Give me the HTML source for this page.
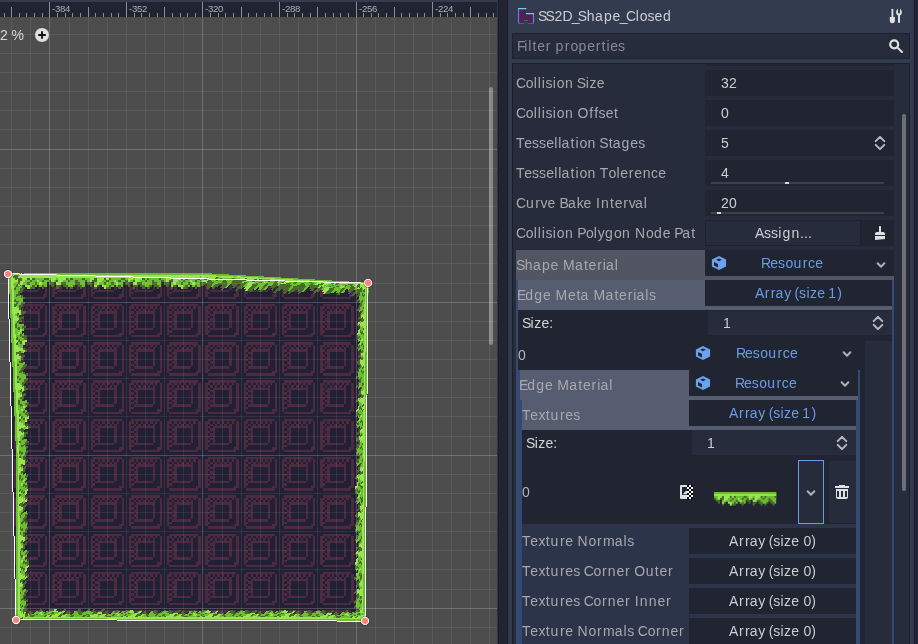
<!DOCTYPE html>
<html><head><meta charset="utf-8"><title>SS2D_Shape_Closed</title>
<style>
html,body{margin:0;padding:0;}
body{width:918px;height:644px;overflow:hidden;background:#202531;font-family:"Liberation Sans",sans-serif;font-size:14px;position:relative;}
.a{position:absolute;}
.t{will-change:transform;position:absolute;white-space:nowrap;line-height:16px;height:16px;font-size:14px;}
svg{position:absolute;overflow:visible;}

</style></head><body>
<div class="a" style="left:0;top:0;width:497px;height:644px;background:#4d4d4d;overflow:hidden;">
<svg width="497" height="644" viewBox="0 0 497 644" style="left:0;top:0;overflow:hidden;">
<defs>
<g id="tl" shape-rendering="crispEdges" fill="#4c2a40"><rect x="2" y="1" width="12" height="1"/><rect x="1" y="2" width="2" height="1"/><rect x="4" y="2" width="1" height="1"/><rect x="6" y="2" width="1" height="1"/><rect x="8" y="2" width="1" height="1"/><rect x="10" y="2" width="1" height="1"/><rect x="12" y="2" width="1" height="1"/><rect x="14" y="2" width="1" height="1"/><rect x="1" y="3" width="1" height="1"/><rect x="3" y="3" width="1" height="1"/><rect x="5" y="3" width="1" height="1"/><rect x="7" y="3" width="1" height="1"/><rect x="9" y="3" width="1" height="1"/><rect x="11" y="3" width="1" height="1"/><rect x="14" y="3" width="1" height="1"/><rect x="1" y="4" width="2" height="1"/><rect x="4" y="4" width="8" height="1"/><rect x="14" y="4" width="1" height="1"/><rect x="1" y="5" width="1" height="1"/><rect x="3" y="5" width="2" height="1"/><rect x="11" y="5" width="1" height="1"/><rect x="14" y="5" width="1" height="1"/><rect x="1" y="6" width="2" height="1"/><rect x="4" y="6" width="1" height="1"/><rect x="11" y="6" width="1" height="1"/><rect x="14" y="6" width="1" height="1"/><rect x="1" y="7" width="1" height="1"/><rect x="3" y="7" width="2" height="1"/><rect x="11" y="7" width="1" height="1"/><rect x="14" y="7" width="1" height="1"/><rect x="1" y="8" width="2" height="1"/><rect x="4" y="8" width="1" height="1"/><rect x="11" y="8" width="1" height="1"/><rect x="14" y="8" width="1" height="1"/><rect x="1" y="9" width="1" height="1"/><rect x="3" y="9" width="2" height="1"/><rect x="11" y="9" width="1" height="1"/><rect x="14" y="9" width="1" height="1"/><rect x="1" y="10" width="2" height="1"/><rect x="4" y="10" width="1" height="1"/><rect x="11" y="10" width="1" height="1"/><rect x="14" y="10" width="1" height="1"/><rect x="1" y="11" width="1" height="1"/><rect x="3" y="11" width="8" height="1"/><rect x="14" y="11" width="1" height="1"/><rect x="1" y="12" width="2" height="1"/><rect x="14" y="12" width="1" height="1"/><rect x="1" y="13" width="1" height="1"/><rect x="13" y="13" width="2" height="1"/><rect x="2" y="14" width="12" height="1"/></g>
<g id="gr" shape-rendering="crispEdges"><rect x="0" y="0" width="32" height="1" fill="#6abe30"/><rect x="0" y="1" width="32" height="1" fill="#99e550"/><rect x="0" y="2" width="2" height="1" fill="#6abe30"/><rect x="2" y="2" width="2" height="1" fill="#99e550"/><rect x="4" y="2" width="1" height="1" fill="#4b692f"/><rect x="5" y="2" width="3" height="1" fill="#99e550"/><rect x="8" y="2" width="1" height="1" fill="#4b692f"/><rect x="9" y="2" width="1" height="1" fill="#99e550"/><rect x="10" y="2" width="1" height="1" fill="#4b692f"/><rect x="11" y="2" width="4" height="1" fill="#6abe30"/><rect x="15" y="2" width="2" height="1" fill="#4b692f"/><rect x="17" y="2" width="1" height="1" fill="#6abe30"/><rect x="18" y="2" width="2" height="1" fill="#99e550"/><rect x="20" y="2" width="1" height="1" fill="#6abe30"/><rect x="21" y="2" width="3" height="1" fill="#99e550"/><rect x="24" y="2" width="1" height="1" fill="#4b692f"/><rect x="25" y="2" width="1" height="1" fill="#6abe30"/><rect x="26" y="2" width="1" height="1" fill="#4b692f"/><rect x="27" y="2" width="4" height="1" fill="#6abe30"/><rect x="31" y="2" width="1" height="1" fill="#4b692f"/><rect x="0" y="3" width="1" height="1" fill="#4b692f"/><rect x="1" y="3" width="1" height="1" fill="#6abe30"/><rect x="2" y="3" width="1" height="1" fill="#99e550"/><rect x="3" y="3" width="2" height="1" fill="#4b692f"/><rect x="5" y="3" width="2" height="1" fill="#99e550"/><rect x="7" y="3" width="2" height="1" fill="#6abe30"/><rect x="9" y="3" width="1" height="1" fill="#4b692f"/><rect x="10" y="3" width="2" height="1" fill="#6abe30"/><rect x="12" y="3" width="1" height="1" fill="#99e550"/><rect x="13" y="3" width="1" height="1" fill="#6abe30"/><rect x="14" y="3" width="1" height="1" fill="#4b692f"/><rect x="15" y="3" width="2" height="1" fill="#6abe30"/><rect x="17" y="3" width="1" height="1" fill="#4b692f"/><rect x="18" y="3" width="1" height="1" fill="#99e550"/><rect x="19" y="3" width="1" height="1" fill="#6abe30"/><rect x="20" y="3" width="1" height="1" fill="#4b692f"/><rect x="21" y="3" width="2" height="1" fill="#99e550"/><rect x="23" y="3" width="2" height="1" fill="#6abe30"/><rect x="25" y="3" width="1" height="1" fill="#4b692f"/><rect x="26" y="3" width="2" height="1" fill="#6abe30"/><rect x="28" y="3" width="1" height="1" fill="#4b692f"/><rect x="29" y="3" width="3" height="1" fill="#6abe30"/><rect x="1" y="4" width="2" height="1" fill="#4b692f"/><rect x="4" y="4" width="1" height="1" fill="#6abe30"/><rect x="5" y="4" width="1" height="1" fill="#99e550"/><rect x="6" y="4" width="2" height="1" fill="#6abe30"/><rect x="8" y="4" width="1" height="1" fill="#4b692f"/><rect x="9" y="4" width="2" height="1" fill="#6abe30"/><rect x="11" y="4" width="1" height="1" fill="#4b692f"/><rect x="12" y="4" width="1" height="1" fill="#6abe30"/><rect x="13" y="4" width="1" height="1" fill="#99e550"/><rect x="14" y="4" width="2" height="1" fill="#6abe30"/><rect x="17" y="4" width="2" height="1" fill="#4b692f"/><rect x="20" y="4" width="2" height="1" fill="#99e550"/><rect x="22" y="4" width="2" height="1" fill="#4b692f"/><rect x="24" y="4" width="4" height="1" fill="#6abe30"/><rect x="28" y="4" width="2" height="1" fill="#4b692f"/><rect x="30" y="4" width="2" height="1" fill="#6abe30"/><rect x="2" y="5" width="1" height="1" fill="#4b692f"/><rect x="4" y="5" width="1" height="1" fill="#99e550"/><rect x="5" y="5" width="1" height="1" fill="#4b692f"/><rect x="7" y="5" width="2" height="1" fill="#99e550"/><rect x="9" y="5" width="1" height="1" fill="#6abe30"/><rect x="10" y="5" width="1" height="1" fill="#4b692f"/><rect x="11" y="5" width="1" height="1" fill="#6abe30"/><rect x="13" y="5" width="1" height="1" fill="#6abe30"/><rect x="14" y="5" width="1" height="1" fill="#4b692f"/><rect x="15" y="5" width="1" height="1" fill="#6abe30"/><rect x="18" y="5" width="1" height="1" fill="#4b692f"/><rect x="20" y="5" width="2" height="1" fill="#4b692f"/><rect x="23" y="5" width="2" height="1" fill="#4b692f"/><rect x="25" y="5" width="2" height="1" fill="#6abe30"/><rect x="27" y="5" width="1" height="1" fill="#4b692f"/><rect x="29" y="5" width="2" height="1" fill="#4b692f"/><rect x="31" y="5" width="1" height="1" fill="#6abe30"/><rect x="4" y="6" width="1" height="1" fill="#4b692f"/><rect x="8" y="6" width="1" height="1" fill="#99e550"/><rect x="9" y="6" width="2" height="1" fill="#4b692f"/><rect x="14" y="6" width="1" height="1" fill="#4b692f"/><rect x="20" y="6" width="1" height="1" fill="#4b692f"/><rect x="24" y="6" width="1" height="1" fill="#4b692f"/><rect x="26" y="6" width="1" height="1" fill="#4b692f"/><rect x="30" y="6" width="1" height="1" fill="#4b692f"/></g>
<pattern id="gp" patternUnits="userSpaceOnUse" x="0" y="0" width="32" height="8"><use href="#gr"/></pattern>
<clipPath id="sc"><polygon points="6.8,271.5 200,271.5 369.5,281.3 366.5,622.3 14.6,621.5"/></clipPath>
<clipPath id="fc"><polygon points="8,274 368,283 365,620.8 16,620"/></clipPath>
</defs>
<g clip-path="url(#fc)">
<polygon points="8,274 368,283 365,620.8 16,620" fill="#222034"/>
<use href="#tl" transform="translate(-26.694,263.278) scale(2.39200)"/>
<use href="#tl" transform="translate(-26.694,301.550) scale(2.39200)"/>
<use href="#tl" transform="translate(-26.694,339.822) scale(2.39200)"/>
<use href="#tl" transform="translate(-26.694,378.094) scale(2.39200)"/>
<use href="#tl" transform="translate(-26.694,416.366) scale(2.39200)"/>
<use href="#tl" transform="translate(-26.694,454.638) scale(2.39200)"/>
<use href="#tl" transform="translate(-26.694,492.910) scale(2.39200)"/>
<use href="#tl" transform="translate(-26.694,531.182) scale(2.39200)"/>
<use href="#tl" transform="translate(-26.694,569.454) scale(2.39200)"/>
<use href="#tl" transform="translate(-26.694,607.726) scale(2.39200)"/>
<use href="#tl" transform="translate(11.578,263.278) scale(2.39200)"/>
<use href="#tl" transform="translate(11.578,301.550) scale(2.39200)"/>
<use href="#tl" transform="translate(11.578,339.822) scale(2.39200)"/>
<use href="#tl" transform="translate(11.578,378.094) scale(2.39200)"/>
<use href="#tl" transform="translate(11.578,416.366) scale(2.39200)"/>
<use href="#tl" transform="translate(11.578,454.638) scale(2.39200)"/>
<use href="#tl" transform="translate(11.578,492.910) scale(2.39200)"/>
<use href="#tl" transform="translate(11.578,531.182) scale(2.39200)"/>
<use href="#tl" transform="translate(11.578,569.454) scale(2.39200)"/>
<use href="#tl" transform="translate(11.578,607.726) scale(2.39200)"/>
<use href="#tl" transform="translate(49.850,263.278) scale(2.39200)"/>
<use href="#tl" transform="translate(49.850,301.550) scale(2.39200)"/>
<use href="#tl" transform="translate(49.850,339.822) scale(2.39200)"/>
<use href="#tl" transform="translate(49.850,378.094) scale(2.39200)"/>
<use href="#tl" transform="translate(49.850,416.366) scale(2.39200)"/>
<use href="#tl" transform="translate(49.850,454.638) scale(2.39200)"/>
<use href="#tl" transform="translate(49.850,492.910) scale(2.39200)"/>
<use href="#tl" transform="translate(49.850,531.182) scale(2.39200)"/>
<use href="#tl" transform="translate(49.850,569.454) scale(2.39200)"/>
<use href="#tl" transform="translate(49.850,607.726) scale(2.39200)"/>
<use href="#tl" transform="translate(88.122,263.278) scale(2.39200)"/>
<use href="#tl" transform="translate(88.122,301.550) scale(2.39200)"/>
<use href="#tl" transform="translate(88.122,339.822) scale(2.39200)"/>
<use href="#tl" transform="translate(88.122,378.094) scale(2.39200)"/>
<use href="#tl" transform="translate(88.122,416.366) scale(2.39200)"/>
<use href="#tl" transform="translate(88.122,454.638) scale(2.39200)"/>
<use href="#tl" transform="translate(88.122,492.910) scale(2.39200)"/>
<use href="#tl" transform="translate(88.122,531.182) scale(2.39200)"/>
<use href="#tl" transform="translate(88.122,569.454) scale(2.39200)"/>
<use href="#tl" transform="translate(88.122,607.726) scale(2.39200)"/>
<use href="#tl" transform="translate(126.394,263.278) scale(2.39200)"/>
<use href="#tl" transform="translate(126.394,301.550) scale(2.39200)"/>
<use href="#tl" transform="translate(126.394,339.822) scale(2.39200)"/>
<use href="#tl" transform="translate(126.394,378.094) scale(2.39200)"/>
<use href="#tl" transform="translate(126.394,416.366) scale(2.39200)"/>
<use href="#tl" transform="translate(126.394,454.638) scale(2.39200)"/>
<use href="#tl" transform="translate(126.394,492.910) scale(2.39200)"/>
<use href="#tl" transform="translate(126.394,531.182) scale(2.39200)"/>
<use href="#tl" transform="translate(126.394,569.454) scale(2.39200)"/>
<use href="#tl" transform="translate(126.394,607.726) scale(2.39200)"/>
<use href="#tl" transform="translate(164.666,263.278) scale(2.39200)"/>
<use href="#tl" transform="translate(164.666,301.550) scale(2.39200)"/>
<use href="#tl" transform="translate(164.666,339.822) scale(2.39200)"/>
<use href="#tl" transform="translate(164.666,378.094) scale(2.39200)"/>
<use href="#tl" transform="translate(164.666,416.366) scale(2.39200)"/>
<use href="#tl" transform="translate(164.666,454.638) scale(2.39200)"/>
<use href="#tl" transform="translate(164.666,492.910) scale(2.39200)"/>
<use href="#tl" transform="translate(164.666,531.182) scale(2.39200)"/>
<use href="#tl" transform="translate(164.666,569.454) scale(2.39200)"/>
<use href="#tl" transform="translate(164.666,607.726) scale(2.39200)"/>
<use href="#tl" transform="translate(202.938,263.278) scale(2.39200)"/>
<use href="#tl" transform="translate(202.938,301.550) scale(2.39200)"/>
<use href="#tl" transform="translate(202.938,339.822) scale(2.39200)"/>
<use href="#tl" transform="translate(202.938,378.094) scale(2.39200)"/>
<use href="#tl" transform="translate(202.938,416.366) scale(2.39200)"/>
<use href="#tl" transform="translate(202.938,454.638) scale(2.39200)"/>
<use href="#tl" transform="translate(202.938,492.910) scale(2.39200)"/>
<use href="#tl" transform="translate(202.938,531.182) scale(2.39200)"/>
<use href="#tl" transform="translate(202.938,569.454) scale(2.39200)"/>
<use href="#tl" transform="translate(202.938,607.726) scale(2.39200)"/>
<use href="#tl" transform="translate(241.210,263.278) scale(2.39200)"/>
<use href="#tl" transform="translate(241.210,301.550) scale(2.39200)"/>
<use href="#tl" transform="translate(241.210,339.822) scale(2.39200)"/>
<use href="#tl" transform="translate(241.210,378.094) scale(2.39200)"/>
<use href="#tl" transform="translate(241.210,416.366) scale(2.39200)"/>
<use href="#tl" transform="translate(241.210,454.638) scale(2.39200)"/>
<use href="#tl" transform="translate(241.210,492.910) scale(2.39200)"/>
<use href="#tl" transform="translate(241.210,531.182) scale(2.39200)"/>
<use href="#tl" transform="translate(241.210,569.454) scale(2.39200)"/>
<use href="#tl" transform="translate(241.210,607.726) scale(2.39200)"/>
<use href="#tl" transform="translate(279.482,263.278) scale(2.39200)"/>
<use href="#tl" transform="translate(279.482,301.550) scale(2.39200)"/>
<use href="#tl" transform="translate(279.482,339.822) scale(2.39200)"/>
<use href="#tl" transform="translate(279.482,378.094) scale(2.39200)"/>
<use href="#tl" transform="translate(279.482,416.366) scale(2.39200)"/>
<use href="#tl" transform="translate(279.482,454.638) scale(2.39200)"/>
<use href="#tl" transform="translate(279.482,492.910) scale(2.39200)"/>
<use href="#tl" transform="translate(279.482,531.182) scale(2.39200)"/>
<use href="#tl" transform="translate(279.482,569.454) scale(2.39200)"/>
<use href="#tl" transform="translate(279.482,607.726) scale(2.39200)"/>
<use href="#tl" transform="translate(317.754,263.278) scale(2.39200)"/>
<use href="#tl" transform="translate(317.754,301.550) scale(2.39200)"/>
<use href="#tl" transform="translate(317.754,339.822) scale(2.39200)"/>
<use href="#tl" transform="translate(317.754,378.094) scale(2.39200)"/>
<use href="#tl" transform="translate(317.754,416.366) scale(2.39200)"/>
<use href="#tl" transform="translate(317.754,454.638) scale(2.39200)"/>
<use href="#tl" transform="translate(317.754,492.910) scale(2.39200)"/>
<use href="#tl" transform="translate(317.754,531.182) scale(2.39200)"/>
<use href="#tl" transform="translate(317.754,569.454) scale(2.39200)"/>
<use href="#tl" transform="translate(317.754,607.726) scale(2.39200)"/>
<use href="#tl" transform="translate(356.026,263.278) scale(2.39200)"/>
<use href="#tl" transform="translate(356.026,301.550) scale(2.39200)"/>
<use href="#tl" transform="translate(356.026,339.822) scale(2.39200)"/>
<use href="#tl" transform="translate(356.026,378.094) scale(2.39200)"/>
<use href="#tl" transform="translate(356.026,416.366) scale(2.39200)"/>
<use href="#tl" transform="translate(356.026,454.638) scale(2.39200)"/>
<use href="#tl" transform="translate(356.026,492.910) scale(2.39200)"/>
<use href="#tl" transform="translate(356.026,531.182) scale(2.39200)"/>
<use href="#tl" transform="translate(356.026,569.454) scale(2.39200)"/>
<use href="#tl" transform="translate(356.026,607.726) scale(2.39200)"/>
</g>
<g clip-path="url(#sc)">
<clipPath id="gc0"><rect x="0" y="-2" width="192.30" height="26"/></clipPath>
<g transform="translate(8.3,272.8) rotate(0.0000)" clip-path="url(#gc0)">
<svg x="0.000" y="-2" width="38.292" height="30" viewBox="0 -0.8421 16 12.6316" preserveAspectRatio="none" overflow="hidden"><g transform="matrix(1,0,0.0000,1,0,0)"><use href="#gr" x="-32"/><use href="#gr"/><use href="#gr" x="32"/></g></svg>
<svg x="38.272" y="-2" width="38.292" height="30" viewBox="16 -0.8421 16 12.6316" preserveAspectRatio="none" overflow="hidden"><g transform="matrix(1,0,0.0000,1,0,0)"><use href="#gr" x="-32"/><use href="#gr"/><use href="#gr" x="32"/></g></svg>
<svg x="76.544" y="-2" width="38.292" height="30" viewBox="0 -0.8421 16 12.6316" preserveAspectRatio="none" overflow="hidden"><g transform="matrix(1,0,0.0000,1,0,0)"><use href="#gr" x="-32"/><use href="#gr"/><use href="#gr" x="32"/></g></svg>
<svg x="114.816" y="-2" width="38.292" height="30" viewBox="16 -0.8421 16 12.6316" preserveAspectRatio="none" overflow="hidden"><g transform="matrix(1,0,0.0000,1,0,0)"><use href="#gr" x="-32"/><use href="#gr"/><use href="#gr" x="32"/></g></svg>
<svg x="153.088" y="-2" width="38.292" height="30" viewBox="0 -0.8421 16 12.6316" preserveAspectRatio="none" overflow="hidden"><g transform="matrix(1,0,0.0000,1,0,0)"><use href="#gr" x="-32"/><use href="#gr"/><use href="#gr" x="32"/></g></svg>
<svg x="191.360" y="-2" width="38.292" height="30" viewBox="16 -0.8421 16 12.6316" preserveAspectRatio="none" overflow="hidden"><g transform="matrix(1,0,0.0000,1,0,0)"><use href="#gr" x="-32"/><use href="#gr"/><use href="#gr" x="32"/></g></svg>
</g>
<clipPath id="gc1"><rect x="0" y="-2" width="168.60" height="26"/></clipPath>
<g transform="matrix(1,0.05833,0,1,200,272.8)" clip-path="url(#gc1)">
<svg x="-0.340" y="-2" width="38.292" height="30" viewBox="16 -0.8865 16 13.2971" preserveAspectRatio="none" overflow="hidden"><g transform="matrix(1,0,-0.7546,1,0,0)"><use href="#gr" x="-32"/><use href="#gr"/><use href="#gr" x="32"/></g></svg>
<svg x="37.932" y="-2" width="38.292" height="30" viewBox="0 -0.9930 16 14.8951" preserveAspectRatio="none" overflow="hidden"><g transform="matrix(1,0,-0.6736,1,0,0)"><use href="#gr" x="-32"/><use href="#gr"/><use href="#gr" x="32"/></g></svg>
<svg x="76.204" y="-2" width="38.292" height="30" viewBox="16 -1.1286 16 16.9297" preserveAspectRatio="none" overflow="hidden"><g transform="matrix(1,0,-0.5927,1,0,0)"><use href="#gr" x="-32"/><use href="#gr"/><use href="#gr" x="32"/></g></svg>
<svg x="114.476" y="-2" width="38.292" height="30" viewBox="0 -1.3072 16 19.6081" preserveAspectRatio="none" overflow="hidden"><g transform="matrix(1,0,-0.5117,1,0,0)"><use href="#gr" x="-32"/><use href="#gr"/><use href="#gr" x="32"/></g></svg>
<svg x="152.748" y="-2" width="38.292" height="30" viewBox="16 -1.5238 16 22.8571" preserveAspectRatio="none" overflow="hidden"><g transform="matrix(1,0,-0.4390,1,0,0)"><use href="#gr" x="-32"/><use href="#gr"/><use href="#gr" x="32"/></g></svg>
</g>
<clipPath id="gc2"><rect x="0" y="-2" width="338.61" height="26"/></clipPath>
<g transform="translate(367.6,283) rotate(90.5085)" clip-path="url(#gc2)">
<svg x="-15.252" y="-2" width="38.292" height="30" viewBox="16 -1.3906 16 20.8591" preserveAspectRatio="none" overflow="hidden"><g transform="matrix(1,0,0.4810,1,0,0)"><use href="#gr" x="-32"/><use href="#gr"/><use href="#gr" x="32"/></g></svg>
<svg x="23.020" y="-2" width="38.292" height="30" viewBox="0 -1.3838 16 20.7570" preserveAspectRatio="none" overflow="hidden"><g transform="matrix(1,0,0.4834,1,0,0)"><use href="#gr" x="-32"/><use href="#gr"/><use href="#gr" x="32"/></g></svg>
<svg x="61.292" y="-2" width="38.292" height="30" viewBox="16 -1.3771 16 20.6559" preserveAspectRatio="none" overflow="hidden"><g transform="matrix(1,0,0.4857,1,0,0)"><use href="#gr" x="-32"/><use href="#gr"/><use href="#gr" x="32"/></g></svg>
<svg x="99.564" y="-2" width="38.292" height="30" viewBox="0 -1.3704 16 20.5557" preserveAspectRatio="none" overflow="hidden"><g transform="matrix(1,0,0.4881,1,0,0)"><use href="#gr" x="-32"/><use href="#gr"/><use href="#gr" x="32"/></g></svg>
<svg x="137.836" y="-2" width="38.292" height="30" viewBox="16 -1.3638 16 20.4565" preserveAspectRatio="none" overflow="hidden"><g transform="matrix(1,0,0.4905,1,0,0)"><use href="#gr" x="-32"/><use href="#gr"/><use href="#gr" x="32"/></g></svg>
<svg x="176.108" y="-2" width="38.292" height="30" viewBox="0 -1.3572 16 20.3583" preserveAspectRatio="none" overflow="hidden"><g transform="matrix(1,0,0.4928,1,0,0)"><use href="#gr" x="-32"/><use href="#gr"/><use href="#gr" x="32"/></g></svg>
<svg x="214.380" y="-2" width="38.292" height="30" viewBox="16 -1.3507 16 20.2610" preserveAspectRatio="none" overflow="hidden"><g transform="matrix(1,0,0.4952,1,0,0)"><use href="#gr" x="-32"/><use href="#gr"/><use href="#gr" x="32"/></g></svg>
<svg x="252.652" y="-2" width="38.292" height="30" viewBox="0 -1.3443 16 20.1646" preserveAspectRatio="none" overflow="hidden"><g transform="matrix(1,0,0.4976,1,0,0)"><use href="#gr" x="-32"/><use href="#gr"/><use href="#gr" x="32"/></g></svg>
<svg x="290.924" y="-2" width="38.292" height="30" viewBox="16 -1.3379 16 20.0692" preserveAspectRatio="none" overflow="hidden"><g transform="matrix(1,0,0.4999,1,0,0)"><use href="#gr" x="-32"/><use href="#gr"/><use href="#gr" x="32"/></g></svg>
<svg x="329.196" y="-2" width="38.292" height="30" viewBox="0 -1.3333 16 20.0000" preserveAspectRatio="none" overflow="hidden"><g transform="matrix(1,0,0.5017,1,0,0)"><use href="#gr" x="-32"/><use href="#gr"/><use href="#gr" x="32"/></g></svg>
</g>
<clipPath id="gc3"><rect x="0" y="-2" width="349.60" height="26"/></clipPath>
<g transform="translate(365,620.6) rotate(-179.8687)" clip-path="url(#gc3)">
<svg x="-8.817" y="-2" width="38.292" height="30" viewBox="0 -1.3333 16 20.0000" preserveAspectRatio="none" overflow="hidden"><g transform="matrix(1,0,-0.5017,1,0,0)"><use href="#gr" x="-32"/><use href="#gr"/><use href="#gr" x="32"/></g></svg>
<svg x="29.455" y="-2" width="38.292" height="30" viewBox="16 -1.3333 16 20.0000" preserveAspectRatio="none" overflow="hidden"><g transform="matrix(1,0,-0.5017,1,0,0)"><use href="#gr" x="-32"/><use href="#gr"/><use href="#gr" x="32"/></g></svg>
<svg x="67.727" y="-2" width="38.292" height="30" viewBox="0 -1.3333 16 20.0000" preserveAspectRatio="none" overflow="hidden"><g transform="matrix(1,0,-0.5017,1,0,0)"><use href="#gr" x="-32"/><use href="#gr"/><use href="#gr" x="32"/></g></svg>
<svg x="105.999" y="-2" width="38.292" height="30" viewBox="16 -1.3333 16 20.0000" preserveAspectRatio="none" overflow="hidden"><g transform="matrix(1,0,-0.5017,1,0,0)"><use href="#gr" x="-32"/><use href="#gr"/><use href="#gr" x="32"/></g></svg>
<svg x="144.271" y="-2" width="38.292" height="30" viewBox="0 -1.3333 16 20.0000" preserveAspectRatio="none" overflow="hidden"><g transform="matrix(1,0,-0.5017,1,0,0)"><use href="#gr" x="-32"/><use href="#gr"/><use href="#gr" x="32"/></g></svg>
<svg x="182.543" y="-2" width="38.292" height="30" viewBox="16 -1.3333 16 20.0000" preserveAspectRatio="none" overflow="hidden"><g transform="matrix(1,0,-0.5017,1,0,0)"><use href="#gr" x="-32"/><use href="#gr"/><use href="#gr" x="32"/></g></svg>
<svg x="220.815" y="-2" width="38.292" height="30" viewBox="0 -1.3333 16 20.0000" preserveAspectRatio="none" overflow="hidden"><g transform="matrix(1,0,-0.5017,1,0,0)"><use href="#gr" x="-32"/><use href="#gr"/><use href="#gr" x="32"/></g></svg>
<svg x="259.087" y="-2" width="38.292" height="30" viewBox="16 -1.3333 16 20.0000" preserveAspectRatio="none" overflow="hidden"><g transform="matrix(1,0,-0.5017,1,0,0)"><use href="#gr" x="-32"/><use href="#gr"/><use href="#gr" x="32"/></g></svg>
<svg x="297.359" y="-2" width="38.292" height="30" viewBox="0 -1.3333 16 20.0000" preserveAspectRatio="none" overflow="hidden"><g transform="matrix(1,0,-0.5017,1,0,0)"><use href="#gr" x="-32"/><use href="#gr"/><use href="#gr" x="32"/></g></svg>
<svg x="335.631" y="-2" width="38.292" height="30" viewBox="16 -1.3333 16 20.0000" preserveAspectRatio="none" overflow="hidden"><g transform="matrix(1,0,-0.5017,1,0,0)"><use href="#gr" x="-32"/><use href="#gr"/><use href="#gr" x="32"/></g></svg>
</g>
<clipPath id="gc4"><rect x="0" y="-2" width="175.60" height="26"/></clipPath>
<g transform="translate(16.3,620) rotate(-90.1964)" clip-path="url(#gc4)">
<svg x="-13.370" y="-2" width="38.292" height="30" viewBox="16 -1.3242 16 19.8637" preserveAspectRatio="none" overflow="hidden"><g transform="matrix(1,0,0.4420,1,0,0)"><use href="#gr" x="-32"/><use href="#gr"/><use href="#gr" x="32"/></g></svg>
<svg x="24.902" y="-2" width="38.292" height="30" viewBox="0 -1.2669 16 19.0037" preserveAspectRatio="none" overflow="hidden"><g transform="matrix(1,0,0.4620,1,0,0)"><use href="#gr" x="-32"/><use href="#gr"/><use href="#gr" x="32"/></g></svg>
<svg x="63.174" y="-2" width="38.292" height="30" viewBox="16 -1.2143 16 18.2151" preserveAspectRatio="none" overflow="hidden"><g transform="matrix(1,0,0.4820,1,0,0)"><use href="#gr" x="-32"/><use href="#gr"/><use href="#gr" x="32"/></g></svg>
<svg x="101.446" y="-2" width="38.292" height="30" viewBox="0 -1.1660 16 17.4894" preserveAspectRatio="none" overflow="hidden"><g transform="matrix(1,0,0.5020,1,0,0)"><use href="#gr" x="-32"/><use href="#gr"/><use href="#gr" x="32"/></g></svg>
<svg x="139.718" y="-2" width="38.292" height="30" viewBox="16 -1.1213 16 16.8193" preserveAspectRatio="none" overflow="hidden"><g transform="matrix(1,0,0.5220,1,0,0)"><use href="#gr" x="-32"/><use href="#gr"/><use href="#gr" x="32"/></g></svg>
</g>
<clipPath id="gc5"><rect x="0" y="-2" width="171.74" height="26"/></clipPath>
<g transform="translate(15.7,445) rotate(-92.3441)" clip-path="url(#gc5)">
<svg x="-35.283" y="-2" width="38.292" height="30" viewBox="16 -1.1034 16 16.5517" preserveAspectRatio="none" overflow="hidden"><g transform="matrix(1,0,0.1894,1,0,0)"><use href="#gr" x="-32"/><use href="#gr"/><use href="#gr" x="32"/></g></svg>
<svg x="2.989" y="-2" width="38.292" height="30" viewBox="0 -1.0747 16 16.1206" preserveAspectRatio="none" overflow="hidden"><g transform="matrix(1,0,0.1945,1,0,0)"><use href="#gr" x="-32"/><use href="#gr"/><use href="#gr" x="32"/></g></svg>
<svg x="41.261" y="-2" width="38.292" height="30" viewBox="16 -1.0284 16 15.4254" preserveAspectRatio="none" overflow="hidden"><g transform="matrix(1,0,0.2033,1,0,0)"><use href="#gr" x="-32"/><use href="#gr"/><use href="#gr" x="32"/></g></svg>
<svg x="79.533" y="-2" width="38.292" height="30" viewBox="0 -0.9859 16 14.7878" preserveAspectRatio="none" overflow="hidden"><g transform="matrix(1,0,0.2120,1,0,0)"><use href="#gr" x="-32"/><use href="#gr"/><use href="#gr" x="32"/></g></svg>
<svg x="117.805" y="-2" width="38.292" height="30" viewBox="16 -0.9467 16 14.2008" preserveAspectRatio="none" overflow="hidden"><g transform="matrix(1,0,0.2208,1,0,0)"><use href="#gr" x="-32"/><use href="#gr"/><use href="#gr" x="32"/></g></svg>
<svg x="156.077" y="-2" width="38.292" height="30" viewBox="0 -0.9143 16 13.7143" preserveAspectRatio="none" overflow="hidden"><g transform="matrix(1,0,0.2286,1,0,0)"><use href="#gr" x="-32"/><use href="#gr"/><use href="#gr" x="32"/></g></svg>
</g>
</g>
<g shape-rendering="crispEdges"><rect x="11" y="17" width="1" height="627" fill="#fff" fill-opacity="0.075"/><rect x="30" y="17" width="1" height="627" fill="#fff" fill-opacity="0.075"/><rect x="49" y="17" width="1" height="627" fill="#fff" fill-opacity="0.2"/><rect x="69" y="17" width="1" height="627" fill="#fff" fill-opacity="0.075"/><rect x="88" y="17" width="1" height="627" fill="#fff" fill-opacity="0.075"/><rect x="107" y="17" width="1" height="627" fill="#fff" fill-opacity="0.075"/><rect x="126" y="17" width="1" height="627" fill="#fff" fill-opacity="0.075"/><rect x="145" y="17" width="1" height="627" fill="#fff" fill-opacity="0.075"/><rect x="164" y="17" width="1" height="627" fill="#fff" fill-opacity="0.075"/><rect x="183" y="17" width="1" height="627" fill="#fff" fill-opacity="0.075"/><rect x="202" y="17" width="1" height="627" fill="#fff" fill-opacity="0.2"/><rect x="222" y="17" width="1" height="627" fill="#fff" fill-opacity="0.075"/><rect x="241" y="17" width="1" height="627" fill="#fff" fill-opacity="0.075"/><rect x="260" y="17" width="1" height="627" fill="#fff" fill-opacity="0.075"/><rect x="279" y="17" width="1" height="627" fill="#fff" fill-opacity="0.075"/><rect x="298" y="17" width="1" height="627" fill="#fff" fill-opacity="0.075"/><rect x="317" y="17" width="1" height="627" fill="#fff" fill-opacity="0.075"/><rect x="336" y="17" width="1" height="627" fill="#fff" fill-opacity="0.075"/><rect x="356" y="17" width="1" height="627" fill="#fff" fill-opacity="0.2"/><rect x="375" y="17" width="1" height="627" fill="#fff" fill-opacity="0.075"/><rect x="394" y="17" width="1" height="627" fill="#fff" fill-opacity="0.075"/><rect x="413" y="17" width="1" height="627" fill="#fff" fill-opacity="0.075"/><rect x="432" y="17" width="1" height="627" fill="#fff" fill-opacity="0.075"/><rect x="451" y="17" width="1" height="627" fill="#fff" fill-opacity="0.075"/><rect x="470" y="17" width="1" height="627" fill="#fff" fill-opacity="0.075"/><rect x="489" y="17" width="1" height="627" fill="#fff" fill-opacity="0.075"/><rect x="0" y="34" width="497" height="1" fill="#fff" fill-opacity="0.075"/><rect x="0" y="53" width="497" height="1" fill="#fff" fill-opacity="0.075"/><rect x="0" y="72" width="497" height="1" fill="#fff" fill-opacity="0.075"/><rect x="0" y="91" width="497" height="1" fill="#fff" fill-opacity="0.075"/><rect x="0" y="110" width="497" height="1" fill="#fff" fill-opacity="0.075"/><rect x="0" y="129" width="497" height="1" fill="#fff" fill-opacity="0.075"/><rect x="0" y="149" width="497" height="1" fill="#fff" fill-opacity="0.2"/><rect x="0" y="168" width="497" height="1" fill="#fff" fill-opacity="0.075"/><rect x="0" y="187" width="497" height="1" fill="#fff" fill-opacity="0.075"/><rect x="0" y="206" width="497" height="1" fill="#fff" fill-opacity="0.075"/><rect x="0" y="225" width="497" height="1" fill="#fff" fill-opacity="0.075"/><rect x="0" y="244" width="497" height="1" fill="#fff" fill-opacity="0.075"/><rect x="0" y="263" width="497" height="1" fill="#fff" fill-opacity="0.075"/><rect x="0" y="283" width="497" height="1" fill="#fff" fill-opacity="0.075"/><rect x="0" y="302" width="497" height="1" fill="#fff" fill-opacity="0.2"/><rect x="0" y="321" width="497" height="1" fill="#fff" fill-opacity="0.075"/><rect x="0" y="340" width="497" height="1" fill="#fff" fill-opacity="0.075"/><rect x="0" y="359" width="497" height="1" fill="#fff" fill-opacity="0.075"/><rect x="0" y="378" width="497" height="1" fill="#fff" fill-opacity="0.075"/><rect x="0" y="397" width="497" height="1" fill="#fff" fill-opacity="0.075"/><rect x="0" y="416" width="497" height="1" fill="#fff" fill-opacity="0.075"/><rect x="0" y="436" width="497" height="1" fill="#fff" fill-opacity="0.075"/><rect x="0" y="455" width="497" height="1" fill="#fff" fill-opacity="0.2"/><rect x="0" y="474" width="497" height="1" fill="#fff" fill-opacity="0.075"/><rect x="0" y="493" width="497" height="1" fill="#fff" fill-opacity="0.075"/><rect x="0" y="512" width="497" height="1" fill="#fff" fill-opacity="0.075"/><rect x="0" y="531" width="497" height="1" fill="#fff" fill-opacity="0.075"/><rect x="0" y="550" width="497" height="1" fill="#fff" fill-opacity="0.075"/><rect x="0" y="569" width="497" height="1" fill="#fff" fill-opacity="0.075"/><rect x="0" y="589" width="497" height="1" fill="#fff" fill-opacity="0.075"/><rect x="0" y="608" width="497" height="1" fill="#fff" fill-opacity="0.2"/><rect x="0" y="627" width="497" height="1" fill="#fff" fill-opacity="0.075"/></g>
<line x1="8" y1="273.71" x2="368" y2="283.2" stroke="#fff" stroke-width="1" shape-rendering="crispEdges"/>
<line x1="368" y1="283" x2="365" y2="621" stroke="#fff" stroke-width="1" shape-rendering="crispEdges"/>
<line x1="365" y1="621.13" x2="16" y2="619.55" stroke="#fff" stroke-width="1" shape-rendering="crispEdges"/>
<line x1="15.97" y1="620" x2="7.98" y2="274" stroke="#fff" stroke-width="1" shape-rendering="crispEdges"/>
<circle cx="8" cy="274.1" r="4.75" fill="#000" fill-opacity="0.45"/><circle cx="8" cy="274.1" r="4.2" fill="#fff"/><circle cx="8" cy="274.1" r="3.05" fill="#ff8080"/>
<circle cx="368.1" cy="282.9" r="4.75" fill="#000" fill-opacity="0.45"/><circle cx="368.1" cy="282.9" r="4.2" fill="#fff"/><circle cx="368.1" cy="282.9" r="3.05" fill="#ff8080"/>
<circle cx="365" cy="620.9" r="4.75" fill="#000" fill-opacity="0.45"/><circle cx="365" cy="620.9" r="4.2" fill="#fff"/><circle cx="365" cy="620.9" r="3.05" fill="#ff8080"/>
<circle cx="16.1" cy="620" r="4.75" fill="#000" fill-opacity="0.45"/><circle cx="16.1" cy="620" r="4.2" fill="#fff"/><circle cx="16.1" cy="620" r="3.05" fill="#ff8080"/>
</svg>
<div class="a" style="left:0px;top:0px;width:497px;height:2px;background:#333b4f;"></div>
<div class="a" style="left:0px;top:2px;width:497px;height:15px;background:#202531;"></div>
<div class="a" style="left:4px;top:13px;width:1px;height:4px;background:#8b8e98"></div><div class="a" style="left:11px;top:7px;width:1px;height:10px;background:#8b8e98"></div><div class="a" style="left:19px;top:13px;width:1px;height:4px;background:#8b8e98"></div><div class="a" style="left:26px;top:13px;width:1px;height:4px;background:#8b8e98"></div><div class="a" style="left:34px;top:13px;width:1px;height:4px;background:#8b8e98"></div><div class="a" style="left:42px;top:13px;width:1px;height:4px;background:#8b8e98"></div><div class="a" style="left:49px;top:2px;width:1px;height:15px;background:#8b8e98"></div><div class="a" style="left:57px;top:13px;width:1px;height:4px;background:#8b8e98"></div><div class="a" style="left:65px;top:13px;width:1px;height:4px;background:#8b8e98"></div><div class="a" style="left:72px;top:13px;width:1px;height:4px;background:#8b8e98"></div><div class="a" style="left:80px;top:13px;width:1px;height:4px;background:#8b8e98"></div><div class="a" style="left:88px;top:7px;width:1px;height:10px;background:#8b8e98"></div><div class="a" style="left:95px;top:13px;width:1px;height:4px;background:#8b8e98"></div><div class="a" style="left:103px;top:13px;width:1px;height:4px;background:#8b8e98"></div><div class="a" style="left:111px;top:13px;width:1px;height:4px;background:#8b8e98"></div><div class="a" style="left:118px;top:13px;width:1px;height:4px;background:#8b8e98"></div><div class="a" style="left:126px;top:2px;width:1px;height:15px;background:#8b8e98"></div><div class="a" style="left:134px;top:13px;width:1px;height:4px;background:#8b8e98"></div><div class="a" style="left:141px;top:13px;width:1px;height:4px;background:#8b8e98"></div><div class="a" style="left:149px;top:13px;width:1px;height:4px;background:#8b8e98"></div><div class="a" style="left:157px;top:13px;width:1px;height:4px;background:#8b8e98"></div><div class="a" style="left:164px;top:7px;width:1px;height:10px;background:#8b8e98"></div><div class="a" style="left:172px;top:13px;width:1px;height:4px;background:#8b8e98"></div><div class="a" style="left:180px;top:13px;width:1px;height:4px;background:#8b8e98"></div><div class="a" style="left:187px;top:13px;width:1px;height:4px;background:#8b8e98"></div><div class="a" style="left:195px;top:13px;width:1px;height:4px;background:#8b8e98"></div><div class="a" style="left:202px;top:2px;width:1px;height:15px;background:#8b8e98"></div><div class="a" style="left:210px;top:13px;width:1px;height:4px;background:#8b8e98"></div><div class="a" style="left:218px;top:13px;width:1px;height:4px;background:#8b8e98"></div><div class="a" style="left:225px;top:13px;width:1px;height:4px;background:#8b8e98"></div><div class="a" style="left:233px;top:13px;width:1px;height:4px;background:#8b8e98"></div><div class="a" style="left:241px;top:7px;width:1px;height:10px;background:#8b8e98"></div><div class="a" style="left:248px;top:13px;width:1px;height:4px;background:#8b8e98"></div><div class="a" style="left:256px;top:13px;width:1px;height:4px;background:#8b8e98"></div><div class="a" style="left:264px;top:13px;width:1px;height:4px;background:#8b8e98"></div><div class="a" style="left:271px;top:13px;width:1px;height:4px;background:#8b8e98"></div><div class="a" style="left:279px;top:2px;width:1px;height:15px;background:#8b8e98"></div><div class="a" style="left:287px;top:13px;width:1px;height:4px;background:#8b8e98"></div><div class="a" style="left:294px;top:13px;width:1px;height:4px;background:#8b8e98"></div><div class="a" style="left:302px;top:13px;width:1px;height:4px;background:#8b8e98"></div><div class="a" style="left:310px;top:13px;width:1px;height:4px;background:#8b8e98"></div><div class="a" style="left:317px;top:7px;width:1px;height:10px;background:#8b8e98"></div><div class="a" style="left:325px;top:13px;width:1px;height:4px;background:#8b8e98"></div><div class="a" style="left:333px;top:13px;width:1px;height:4px;background:#8b8e98"></div><div class="a" style="left:340px;top:13px;width:1px;height:4px;background:#8b8e98"></div><div class="a" style="left:348px;top:13px;width:1px;height:4px;background:#8b8e98"></div><div class="a" style="left:356px;top:2px;width:1px;height:15px;background:#8b8e98"></div><div class="a" style="left:363px;top:13px;width:1px;height:4px;background:#8b8e98"></div><div class="a" style="left:371px;top:13px;width:1px;height:4px;background:#8b8e98"></div><div class="a" style="left:378px;top:13px;width:1px;height:4px;background:#8b8e98"></div><div class="a" style="left:386px;top:13px;width:1px;height:4px;background:#8b8e98"></div><div class="a" style="left:394px;top:7px;width:1px;height:10px;background:#8b8e98"></div><div class="a" style="left:401px;top:13px;width:1px;height:4px;background:#8b8e98"></div><div class="a" style="left:409px;top:13px;width:1px;height:4px;background:#8b8e98"></div><div class="a" style="left:417px;top:13px;width:1px;height:4px;background:#8b8e98"></div><div class="a" style="left:424px;top:13px;width:1px;height:4px;background:#8b8e98"></div><div class="a" style="left:432px;top:2px;width:1px;height:15px;background:#8b8e98"></div><div class="a" style="left:440px;top:13px;width:1px;height:4px;background:#8b8e98"></div><div class="a" style="left:447px;top:13px;width:1px;height:4px;background:#8b8e98"></div><div class="a" style="left:455px;top:13px;width:1px;height:4px;background:#8b8e98"></div><div class="a" style="left:463px;top:13px;width:1px;height:4px;background:#8b8e98"></div><div class="a" style="left:470px;top:7px;width:1px;height:10px;background:#8b8e98"></div><div class="a" style="left:478px;top:13px;width:1px;height:4px;background:#8b8e98"></div><div class="a" style="left:486px;top:13px;width:1px;height:4px;background:#8b8e98"></div><div class="a" style="left:493px;top:13px;width:1px;height:4px;background:#8b8e98"></div>
<div class="t" style="left:51.85px;top:3px;color:#adb0b8;font-size:9.6px;line-height:12px;height:12px;"><span style="letter-spacing:-0.17px">-</span><span style="letter-spacing:-0.32px">3</span><span style="letter-spacing:-0.3px">8</span><span style="letter-spacing:0px">4</span></div>
<div class="t" style="left:128.85px;top:3px;color:#adb0b8;font-size:9.6px;line-height:12px;height:12px;"><span style="letter-spacing:-0.17px">-</span><span style="letter-spacing:-0.28px">3</span><span style="letter-spacing:-0.39px">5</span><span style="letter-spacing:0px">2</span></div>
<div class="t" style="left:204.85px;top:3px;color:#adb0b8;font-size:9.6px;line-height:12px;height:12px;"><span style="letter-spacing:-0.17px">-</span><span style="letter-spacing:-0.33px">3</span><span style="letter-spacing:-0.32px">2</span><span style="letter-spacing:0px">0</span></div>
<div class="t" style="left:281.85px;top:3px;color:#adb0b8;font-size:9.6px;line-height:12px;height:12px;"><span style="letter-spacing:-0.16px">-</span><span style="letter-spacing:-0.33px">2</span><span style="letter-spacing:-0.34px">8</span><span style="letter-spacing:0px">8</span></div>
<div class="t" style="left:358.85px;top:3px;color:#adb0b8;font-size:9.6px;line-height:12px;height:12px;"><span style="letter-spacing:-0.16px">-</span><span style="letter-spacing:-0.28px">2</span><span style="letter-spacing:-0.37px">5</span><span style="letter-spacing:0px">6</span></div>
<div class="t" style="left:434.85px;top:3px;color:#adb0b8;font-size:9.6px;line-height:12px;height:12px;"><span style="letter-spacing:-0.16px">-</span><span style="letter-spacing:-0.34px">2</span><span style="letter-spacing:-0.29px">2</span><span style="letter-spacing:0px">4</span></div>
<div class="t" style="left:0.08px;top:27px;color:#d8d8d8;font-size:14px;line-height:16px;height:16px;"><span style="letter-spacing:0.19px">2</span><span style="letter-spacing:-0.35px"> </span><span style="letter-spacing:0px">%</span></div>
<svg width="18" height="18" viewBox="0 0 18 18" style="left:32.8px;top:25.9px;"><circle cx="9" cy="9" r="7.3" fill="#e0e0e0" stroke="#2a2a2a" stroke-opacity="0.55" stroke-width="0.8"/><path d="M5.2 9h7.6M9 5.2v7.6" stroke="#111" stroke-width="1.9" fill="none"/></svg>
<div class="a" style="left:489px;top:87px;width:4px;height:258px;background:rgba(255,255,255,0.33);border-radius:2px;"></div>
</div>
<div class="a" style="left:497px;top:0px;width:1px;height:644px;background:#2e3548;"></div>
<div class="a" style="left:498px;top:0px;width:1px;height:644px;background:#191c26;"></div>
<div class="a" style="left:507px;top:0px;width:1px;height:644px;background:#191c26;"></div>
<div class="a" style="left:508px;top:0px;width:406px;height:644px;background:#333b4f;"></div>
<div class="a" style="left:914px;top:0px;width:1px;height:644px;background:#191c26;"></div>
<div class="a" style="left:915px;top:0px;width:3px;height:644px;background:#202531;"></div>
<svg width="16" height="16" viewBox="0 0 16 16" style="left:518px;top:8px;">
<defs><pattern id="dp" patternUnits="userSpaceOnUse" width="2" height="2"><g shape-rendering="crispEdges"><rect width="2" height="2" fill="#3d2c66"/><rect width="1" height="1" fill="#5c1a34"/><rect x="1" y="1" width="1" height="1" fill="#5c1a34"/></g></pattern></defs>
<path d="M0.5 0.5H8V5.5H15.5V15.5H10V12H6V15.5H0.5Z" fill="#4a244f"/>
<path d="M0.5 0.5H8V5.5H15.5V15.5H10V12H6V15.5H0.5Z" fill="url(#dp)"/>
<path d="M0.55 0.6V16M15.45 5.6V16" stroke="#6e78f2" stroke-width="1.1" fill="none"/>
<path d="M0 0.6H8.3M8 5.6H16" stroke="#62d2f0" stroke-width="1.2" fill="none"/>
<path d="M0 15.5H6M10 15.5H16M6 12.4H10" stroke="#2d6c8c" stroke-width="1" fill="none"/>
</svg>
<div class="t" style="left:537.61px;top:8px;color:#cccdd3;font-size:14px;line-height:16px;height:16px;"><span style="letter-spacing:-1.75px">S</span><span style="letter-spacing:-0.46px">S</span><span style="letter-spacing:0.2px">2</span><span style="letter-spacing:-0.94px">D</span><span style="letter-spacing:-1.82px">_</span><span style="letter-spacing:-0.11px">S</span><span style="letter-spacing:0.28px">h</span><span style="letter-spacing:1.19px">a</span><span style="letter-spacing:0.85px">p</span><span style="letter-spacing:-0.64px">e</span><span style="letter-spacing:-1.54px">_</span><span style="letter-spacing:-0.35px">C</span><span style="letter-spacing:0.99px">l</span><span style="letter-spacing:-0.18px">o</span><span style="letter-spacing:0.14px">s</span><span style="letter-spacing:0.48px">e</span><span style="letter-spacing:0px">d</span></div>
<svg width="16" height="16" viewBox="0 0 16 16" style="left:888px;top:8px;"><g fill="#e0e0e0"><path d="M3.5 1.6c0-.4.3-.75.9-.75s.9.35.9.75V9H3.5z"/><path d="M1.8 8.9h5.1v4.2a2.1 2.1 0 0 1-2.1 2.1h-.9a2.1 2.1 0 0 1-2.1-2.1z"/><path transform="translate(1,-0.35) scale(1,1.11)" d="m9 1c-1.7839 1.0311-2.4382 3.0803-1.5 5 .15.3 1.5 1 1.5 1v5.9c0 .554.446 1 1 1s1-.446 1-1v-5.9s1.35-.7 1.5-1c.9382-1.9197.2838-3.9689-1.5-5v4h-2z"/></g></svg>
<div class="a" style="left:512px;top:33px;width:398px;height:26px;background:#262c3b;box-sizing:border-box;border:1px solid #1d2130;"></div>
<div class="t" style="left:517.00px;top:38px;color:#858995;font-size:14px;line-height:16px;height:16px;"><span style="letter-spacing:-1.29px">F</span><span style="letter-spacing:0.88px">i</span><span style="letter-spacing:1.13px">l</span><span style="letter-spacing:0.72px">t</span><span style="letter-spacing:0.82px">e</span><span style="letter-spacing:0.69px">r</span><span style="letter-spacing:0.52px"> </span><span style="letter-spacing:1.45px">p</span><span style="letter-spacing:0.99px">r</span><span style="letter-spacing:0.33px">o</span><span style="letter-spacing:0.85px">p</span><span style="letter-spacing:0.82px">e</span><span style="letter-spacing:1.12px">r</span><span style="letter-spacing:0.89px">t</span><span style="letter-spacing:0.73px">i</span><span style="letter-spacing:0.07px">e</span><span style="letter-spacing:0px">s</span></div>
<svg width="16" height="16" viewBox="0 0 16 16" style="left:887.9px;top:37.5px;"><circle cx="6.2" cy="6.3" r="4" fill="none" stroke="#e0e0e0" stroke-width="2.2"/><path d="M9.2 9.4L14 14" stroke="#e0e0e0" stroke-width="2" stroke-linecap="round"/></svg>
<div class="a" style="left:512px;top:63px;width:398px;height:581px;background:#262c3b;box-sizing:border-box;border:1px solid #1a1e28;border-bottom:none;"></div>
<div class="a" style="left:902px;top:114px;width:4px;height:377px;background:#6c6f7a;border-radius:2px;"></div>
<div class="a" style="left:705px;top:64px;width:189px;height:2px;background:#202531;"></div>
<div class="a" style="left:705px;top:70px;width:189px;height:26px;background:#202531;"></div>
<div class="t" style="left:515.54px;top:75px;color:#a6a8ad;font-size:14px;line-height:16px;height:16px;"><span style="letter-spacing:-0.3px">C</span><span style="letter-spacing:0.11px">o</span><span style="letter-spacing:0.89px">l</span><span style="letter-spacing:0.9px">l</span><span style="letter-spacing:0.58px">i</span><span style="letter-spacing:0.31px">s</span><span style="letter-spacing:0.98px">i</span><span style="letter-spacing:0.32px">o</span><span style="letter-spacing:0.82px">n</span><span style="letter-spacing:-0.74px"> </span><span style="letter-spacing:-0.28px">S</span><span style="letter-spacing:0.48px">i</span><span style="letter-spacing:0.24px">z</span><span style="letter-spacing:0px">e</span></div>
<div class="t" style="left:721.07px;top:75px;color:#cccdd3;font-size:14px;line-height:16px;height:16px;"><span style="letter-spacing:0.23px">3</span><span style="letter-spacing:0px">2</span></div>
<div class="a" style="left:705px;top:100px;width:189px;height:26px;background:#202531;"></div>
<div class="t" style="left:515.54px;top:105px;color:#a6a8ad;font-size:14px;line-height:16px;height:16px;"><span style="letter-spacing:-0.3px">C</span><span style="letter-spacing:0.11px">o</span><span style="letter-spacing:0.89px">l</span><span style="letter-spacing:0.9px">l</span><span style="letter-spacing:0.58px">i</span><span style="letter-spacing:0.31px">s</span><span style="letter-spacing:0.98px">i</span><span style="letter-spacing:0.32px">o</span><span style="letter-spacing:0.82px">n</span><span style="letter-spacing:0.08px"> </span><span style="letter-spacing:0.84px">O</span><span style="letter-spacing:1.11px">f</span><span style="letter-spacing:0.3px">f</span><span style="letter-spacing:0.14px">s</span><span style="letter-spacing:0.6px">e</span><span style="letter-spacing:0px">t</span></div>
<div class="t" style="left:721.11px;top:105px;color:#cccdd3;font-size:14px;line-height:16px;height:16px;"><span style="letter-spacing:0px">0</span></div>
<div class="a" style="left:705px;top:130px;width:189px;height:26px;background:#202531;"></div>
<div class="t" style="left:515.94px;top:135px;color:#a6a8ad;font-size:14px;line-height:16px;height:16px;"><span style="letter-spacing:-0.39px">T</span><span style="letter-spacing:0.07px">e</span><span style="letter-spacing:0px">s</span><span style="letter-spacing:0.14px">s</span><span style="letter-spacing:0.36px">e</span><span style="letter-spacing:0.89px">l</span><span style="letter-spacing:0.13px">l</span><span style="letter-spacing:1.21px">a</span><span style="letter-spacing:0.89px">t</span><span style="letter-spacing:0.98px">i</span><span style="letter-spacing:0.32px">o</span><span style="letter-spacing:0.82px">n</span><span style="letter-spacing:-0.74px"> </span><span style="letter-spacing:-0.06px">S</span><span style="letter-spacing:0.12px">t</span><span style="letter-spacing:1.08px">a</span><span style="letter-spacing:0.95px">g</span><span style="letter-spacing:0.07px">e</span><span style="letter-spacing:0px">s</span></div>
<div class="t" style="left:721.17px;top:135px;color:#cccdd3;font-size:14px;line-height:16px;height:16px;"><span style="letter-spacing:0px">5</span></div>
<div class="a" style="left:705px;top:160px;width:189px;height:26px;background:#202531;"></div>
<div class="t" style="left:515.94px;top:165px;color:#a6a8ad;font-size:14px;line-height:16px;height:16px;"><span style="letter-spacing:-0.39px">T</span><span style="letter-spacing:0.07px">e</span><span style="letter-spacing:0px">s</span><span style="letter-spacing:0.14px">s</span><span style="letter-spacing:0.36px">e</span><span style="letter-spacing:0.89px">l</span><span style="letter-spacing:0.13px">l</span><span style="letter-spacing:1.21px">a</span><span style="letter-spacing:0.89px">t</span><span style="letter-spacing:0.98px">i</span><span style="letter-spacing:0.32px">o</span><span style="letter-spacing:0.82px">n</span><span style="letter-spacing:-0.33px"> </span><span style="letter-spacing:0.18px">T</span><span style="letter-spacing:0.11px">o</span><span style="letter-spacing:0.74px">l</span><span style="letter-spacing:0.82px">e</span><span style="letter-spacing:0.73px">r</span><span style="letter-spacing:0.57px">e</span><span style="letter-spacing:0.66px">n</span><span style="letter-spacing:0.2px">c</span><span style="letter-spacing:0px">e</span></div>
<div class="t" style="left:721.16px;top:165px;color:#cccdd3;font-size:14px;line-height:16px;height:16px;"><span style="letter-spacing:0px">4</span></div>
<div class="a" style="left:705px;top:190px;width:189px;height:26px;background:#202531;"></div>
<div class="t" style="left:515.54px;top:195px;color:#a6a8ad;font-size:14px;line-height:16px;height:16px;"><span style="letter-spacing:-0.25px">C</span><span style="letter-spacing:1.51px">u</span><span style="letter-spacing:0.69px">r</span><span style="letter-spacing:0.04px">v</span><span style="letter-spacing:0.17px">e</span><span style="letter-spacing:0.03px"> </span><span style="letter-spacing:-0.82px">B</span><span style="letter-spacing:1.01px">a</span><span style="letter-spacing:-0.19px">k</span><span style="letter-spacing:0.17px">e</span><span style="letter-spacing:0.48px"> </span><span style="letter-spacing:1.14px">I</span><span style="letter-spacing:1.25px">n</span><span style="letter-spacing:0.72px">t</span><span style="letter-spacing:0.82px">e</span><span style="letter-spacing:0.69px">r</span><span style="letter-spacing:-0.56px">v</span><span style="letter-spacing:0.97px">a</span><span style="letter-spacing:0px">l</span></div>
<div class="t" style="left:721.08px;top:195px;color:#cccdd3;font-size:14px;line-height:16px;height:16px;"><span style="letter-spacing:0.24px">2</span><span style="letter-spacing:0px">0</span></div>
<div class="a" style="left:705px;top:220px;width:189px;height:26px;background:#202531;"></div>
<div class="t" style="left:515.54px;top:225px;color:#a6a8ad;font-size:14px;line-height:16px;height:16px;"><span style="letter-spacing:-0.3px">C</span><span style="letter-spacing:0.11px">o</span><span style="letter-spacing:0.89px">l</span><span style="letter-spacing:0.9px">l</span><span style="letter-spacing:0.58px">i</span><span style="letter-spacing:0.31px">s</span><span style="letter-spacing:0.98px">i</span><span style="letter-spacing:0.32px">o</span><span style="letter-spacing:0.82px">n</span><span style="letter-spacing:-0.26px"> </span><span style="letter-spacing:-0.67px">P</span><span style="letter-spacing:0.11px">o</span><span style="letter-spacing:0.72px">l</span><span style="letter-spacing:0.29px">y</span><span style="letter-spacing:1.2px">g</span><span style="letter-spacing:0.32px">o</span><span style="letter-spacing:0.82px">n</span><span style="letter-spacing:0.32px"> </span><span style="letter-spacing:0.98px">N</span><span style="letter-spacing:0.22px">o</span><span style="letter-spacing:0.95px">d</span><span style="letter-spacing:0.17px">e</span><span style="letter-spacing:-0.26px"> </span><span style="letter-spacing:-1.53px">P</span><span style="letter-spacing:1.21px">a</span><span style="letter-spacing:0px">t</span></div>
<svg width="12" height="16" viewBox="-6 -8 12 16" style="left:874px;top:135px;"><path d="M-4.3 -1.9L0 -6.15L4.3 -1.9M-4.3 1.9L0 6.15L4.3 1.9" fill="none" stroke="#b9bbc1" stroke-width="2" stroke-linejoin="round" stroke-linecap="round"/></svg>
<div class="a" style="left:711px;top:182px;width:173px;height:2px;background:#3d414e;"></div>
<div class="a" style="left:785px;top:182px;width:4px;height:2px;background:#d6d7dc;"></div>
<div class="a" style="left:711px;top:212px;width:173px;height:2px;background:#3d414e;"></div>
<div class="a" style="left:717px;top:212px;width:4px;height:2px;background:#d6d7dc;"></div>
<div class="a" style="left:705px;top:220px;width:156px;height:26px;background:#262c3b;box-sizing:border-box;border:1px solid #1e2230;"></div>
<div class="t" style="left:754.92px;top:225px;color:#cccdd3;font-size:14px;line-height:16px;height:16px;"><span style="letter-spacing:-0.31px">A</span><span style="letter-spacing:0px">s</span><span style="letter-spacing:0.31px">s</span><span style="letter-spacing:0.99px">i</span><span style="letter-spacing:1.31px">g</span><span style="letter-spacing:0.69px">n</span><span style="letter-spacing:0.11px">..</span><span style="letter-spacing:0px">.</span></div>
<svg width="16" height="16" viewBox="0 0 16 16" style="left:872.3px;top:224.8px;"><path d="m8 1c-.55228 0-1 .44772-1 1v5h-2c-1.108 0-2 .892-2 2v1h10v-1c0-1.108-.892-2-2-2h-2v-5c0-.55228-.44772-1-1-1zm-5 10v4l10-1v-3z" fill="#e0e0e0"/></svg>
<div class="a" style="left:516px;top:250px;width:378px;height:30px;background:#525663;"></div>
<div class="a" style="left:705px;top:250px;width:189px;height:26px;background:#202531;"></div>
<div class="t" style="left:515.61px;top:257px;color:#a6a8ad;font-size:14px;line-height:16px;height:16px;"><span style="letter-spacing:-0.52px">S</span><span style="letter-spacing:0.28px">h</span><span style="letter-spacing:1.19px">a</span><span style="letter-spacing:0.85px">p</span><span style="letter-spacing:0.17px">e</span><span style="letter-spacing:0.57px"> </span><span style="letter-spacing:0.31px">M</span><span style="letter-spacing:1.21px">a</span><span style="letter-spacing:0.72px">t</span><span style="letter-spacing:0.82px">e</span><span style="letter-spacing:0.9px">r</span><span style="letter-spacing:0.12px">i</span><span style="letter-spacing:0.97px">a</span><span style="letter-spacing:0px">l</span></div>
<svg width="16" height="16" viewBox="0 0 16 16" style="left:711px;top:255px;"><path d="M8 0.9L0.9 4.5V11.5L8 15.1L15.1 11.5V4.5ZM8 3.4L10.8 4.8L8 6.2L5.2 4.8ZM3 7L7 9V12.4L3 10.4Z" fill="#6ba1ee" fill-rule="evenodd"/></svg>
<div class="t" style="left:760.90px;top:255px;color:#699ce8;font-size:14px;line-height:16px;height:16px;"><span style="letter-spacing:-0.92px">R</span><span style="letter-spacing:0.07px">e</span><span style="letter-spacing:0.4px">s</span><span style="letter-spacing:0.27px">o</span><span style="letter-spacing:1.51px">u</span><span style="letter-spacing:0.54px">r</span><span style="letter-spacing:0.2px">c</span><span style="letter-spacing:0px">e</span></div>
<svg width="12" height="8" viewBox="-6 -4 12 8" style="left:874.95px;top:260.5px;"><path d="M-3.35 -1.75L0 1.75L3.35 -1.75" fill="none" stroke="#adafb6" stroke-width="2" stroke-linejoin="round" stroke-linecap="round"/></svg>
<div class="a" style="left:516px;top:280px;width:2px;height:364px;background:#354a72;"></div>
<div class="a" style="left:892px;top:280px;width:2px;height:364px;background:#354a72;"></div>
<div class="a" style="left:518px;top:280px;width:374px;height:30px;background:#565d70;"></div>
<div class="a" style="left:705px;top:280px;width:187px;height:26px;background:#202531;"></div>
<div class="t" style="left:517.10px;top:287px;color:#a6a8ad;font-size:14px;line-height:16px;height:16px;"><span style="letter-spacing:-1.08px">E</span><span style="letter-spacing:1.21px">d</span><span style="letter-spacing:0.95px">g</span><span style="letter-spacing:0.17px">e</span><span style="letter-spacing:0.57px"> </span><span style="letter-spacing:0.92px">M</span><span style="letter-spacing:0.6px">e</span><span style="letter-spacing:0.12px">t</span><span style="letter-spacing:0.78px">a</span><span style="letter-spacing:0.57px"> </span><span style="letter-spacing:0.31px">M</span><span style="letter-spacing:1.21px">a</span><span style="letter-spacing:0.72px">t</span><span style="letter-spacing:0.82px">e</span><span style="letter-spacing:0.9px">r</span><span style="letter-spacing:0.12px">i</span><span style="letter-spacing:0.97px">a</span><span style="letter-spacing:0.6px">l</span><span style="letter-spacing:0px">s</span></div>
<div class="t" style="left:754.92px;top:285px;color:#699ce8;font-size:14px;line-height:16px;height:16px;"><span style="letter-spacing:0.44px">A</span><span style="letter-spacing:1.34px">r</span><span style="letter-spacing:0.13px">r</span><span style="letter-spacing:0.8px">a</span><span style="letter-spacing:-0.02px">y</span><span style="letter-spacing:-0.5px"> </span><span style="letter-spacing:-0.15px">(</span><span style="letter-spacing:0.31px">s</span><span style="letter-spacing:0.48px">i</span><span style="letter-spacing:0.24px">z</span><span style="letter-spacing:0.17px">e</span><span style="letter-spacing:-0.92px"> </span><span style="letter-spacing:1.28px">1</span><span style="letter-spacing:0px">)</span></div>
<div class="a" style="left:518px;top:310px;width:374px;height:334px;background:#202531;"></div>
<div class="t" style="left:521.71px;top:315px;color:#d3d4d9;font-size:14px;line-height:16px;height:16px;"><span style="letter-spacing:-0.79px">S</span><span style="letter-spacing:0.48px">i</span><span style="letter-spacing:0.24px">z</span><span style="letter-spacing:0.05px">e</span><span style="letter-spacing:0px">:</span></div>
<div class="a" style="left:708px;top:311px;width:184px;height:24px;background:#262c3b;"></div>
<div class="t" style="left:723.28px;top:315px;color:#cccdd3;font-size:14px;line-height:16px;height:16px;"><span style="letter-spacing:0px">1</span></div>
<svg width="12" height="16" viewBox="-6 -8 12 16" style="left:872.2px;top:315.1px;"><path d="M-4.3 -1.9L0 -6.15L4.3 -1.9M-4.3 1.9L0 6.15L4.3 1.9" fill="none" stroke="#b9bbc1" stroke-width="2" stroke-linejoin="round" stroke-linecap="round"/></svg>
<div class="t" style="left:518.11px;top:347px;color:#b4b5b9;font-size:14px;line-height:16px;height:16px;"><span style="letter-spacing:0px">0</span></div>
<svg width="16" height="16" viewBox="0 0 16 16" style="left:695px;top:345px;"><path d="M8 0.9L0.9 4.5V11.5L8 15.1L15.1 11.5V4.5ZM8 3.4L10.8 4.8L8 6.2L5.2 4.8ZM3 7L7 9V12.4L3 10.4Z" fill="#6ba1ee" fill-rule="evenodd"/></svg>
<div class="t" style="left:736.20px;top:345px;color:#699ce8;font-size:14px;line-height:16px;height:16px;"><span style="letter-spacing:-1.22px">R</span><span style="letter-spacing:0.07px">e</span><span style="letter-spacing:0.4px">s</span><span style="letter-spacing:0.27px">o</span><span style="letter-spacing:1.51px">u</span><span style="letter-spacing:0.54px">r</span><span style="letter-spacing:0.2px">c</span><span style="letter-spacing:0px">e</span></div>
<svg width="12" height="8" viewBox="-6 -4 12 8" style="left:841.1px;top:350.4px;"><path d="M-3.35 -1.75L0 1.75L3.35 -1.75" fill="none" stroke="#adafb6" stroke-width="2" stroke-linejoin="round" stroke-linecap="round"/></svg>
<div class="a" style="left:865px;top:341px;width:27px;height:303px;background:#262c3b;"></div>
<div class="a" style="left:518px;top:370px;width:2px;height:274px;background:#354a72;"></div>
<div class="a" style="left:858px;top:370px;width:2px;height:274px;background:#354a72;"></div>
<div class="a" style="left:520px;top:370px;width:338px;height:30px;background:#565d70;"></div>
<div class="a" style="left:689px;top:370px;width:169px;height:26px;background:#202531;"></div>
<div class="t" style="left:519.20px;top:377px;color:#a6a8ad;font-size:14px;line-height:16px;height:16px;"><span style="letter-spacing:-1.18px">E</span><span style="letter-spacing:1.21px">d</span><span style="letter-spacing:0.95px">g</span><span style="letter-spacing:0.17px">e</span><span style="letter-spacing:0.57px"> </span><span style="letter-spacing:0.31px">M</span><span style="letter-spacing:1.21px">a</span><span style="letter-spacing:0.72px">t</span><span style="letter-spacing:0.82px">e</span><span style="letter-spacing:0.9px">r</span><span style="letter-spacing:0.12px">i</span><span style="letter-spacing:0.97px">a</span><span style="letter-spacing:0px">l</span></div>
<svg width="16" height="16" viewBox="0 0 16 16" style="left:695px;top:375px;"><path d="M8 0.9L0.9 4.5V11.5L8 15.1L15.1 11.5V4.5ZM8 3.4L10.8 4.8L8 6.2L5.2 4.8ZM3 7L7 9V12.4L3 10.4Z" fill="#6ba1ee" fill-rule="evenodd"/></svg>
<div class="t" style="left:735.20px;top:375px;color:#699ce8;font-size:14px;line-height:16px;height:16px;"><span style="letter-spacing:-1.22px">R</span><span style="letter-spacing:0.07px">e</span><span style="letter-spacing:0.4px">s</span><span style="letter-spacing:0.27px">o</span><span style="letter-spacing:1.51px">u</span><span style="letter-spacing:0.54px">r</span><span style="letter-spacing:0.2px">c</span><span style="letter-spacing:0px">e</span></div>
<svg width="12" height="8" viewBox="-6 -4 12 8" style="left:839.2px;top:380.3px;"><path d="M-3.35 -1.75L0 1.75L3.35 -1.75" fill="none" stroke="#adafb6" stroke-width="2" stroke-linejoin="round" stroke-linecap="round"/></svg>
<div class="a" style="left:520px;top:400px;width:2px;height:244px;background:#354a72;"></div>
<div class="a" style="left:856px;top:400px;width:2px;height:244px;background:#354a72;"></div>
<div class="a" style="left:522px;top:400px;width:334px;height:30px;background:#565d70;"></div>
<div class="a" style="left:689px;top:400px;width:167px;height:26px;background:#202531;"></div>
<div class="t" style="left:521.84px;top:407px;color:#a6a8ad;font-size:14px;line-height:16px;height:16px;"><span style="letter-spacing:-0.29px">T</span><span style="letter-spacing:0.32px">e</span><span style="letter-spacing:0.29px">x</span><span style="letter-spacing:1.03px">t</span><span style="letter-spacing:1.51px">u</span><span style="letter-spacing:0.73px">r</span><span style="letter-spacing:0.07px">e</span><span style="letter-spacing:0px">s</span></div>
<div class="t" style="left:728.82px;top:405px;color:#699ce8;font-size:14px;line-height:16px;height:16px;"><span style="letter-spacing:0.54px">A</span><span style="letter-spacing:1.34px">r</span><span style="letter-spacing:0.13px">r</span><span style="letter-spacing:0.8px">a</span><span style="letter-spacing:-0.02px">y</span><span style="letter-spacing:-0.5px"> </span><span style="letter-spacing:-0.15px">(</span><span style="letter-spacing:0.31px">s</span><span style="letter-spacing:0.48px">i</span><span style="letter-spacing:0.24px">z</span><span style="letter-spacing:0.17px">e</span><span style="letter-spacing:-0.92px"> </span><span style="letter-spacing:1.28px">1</span><span style="letter-spacing:0px">)</span></div>
<div class="a" style="left:522px;top:430px;width:334px;height:94px;background:#202531;"></div>
<div class="t" style="left:525.61px;top:435px;color:#d3d4d9;font-size:14px;line-height:16px;height:16px;"><span style="letter-spacing:-0.69px">S</span><span style="letter-spacing:0.48px">i</span><span style="letter-spacing:0.24px">z</span><span style="letter-spacing:0.05px">e</span><span style="letter-spacing:0px">:</span></div>
<div class="a" style="left:692px;top:430px;width:164px;height:25px;background:#262c3b;"></div>
<div class="t" style="left:707.38px;top:435px;color:#cccdd3;font-size:14px;line-height:16px;height:16px;"><span style="letter-spacing:0px">1</span></div>
<svg width="12" height="16" viewBox="-6 -8 12 16" style="left:835.9px;top:434.9px;"><path d="M-4.3 -1.9L0 -6.15L4.3 -1.9M-4.3 1.9L0 6.15L4.3 1.9" fill="none" stroke="#b9bbc1" stroke-width="2" stroke-linejoin="round" stroke-linecap="round"/></svg>
<div class="t" style="left:522.11px;top:484px;color:#b4b5b9;font-size:14px;line-height:16px;height:16px;"><span style="letter-spacing:0px">0</span></div>
<svg width="16" height="16" viewBox="0 0 16 16" style="left:679px;top:484px;">
<path d="M2 1a1 1 0 0 0-1 1v12a1 1 0 0 0 1 1h6v-4H3V3h5V1z" fill="#e0e0e0"/>
<path d="M3.8 10.2L7.2 6.6L8 7.3V10.2z" fill="#e0e0e0"/>
<g fill="#000"><rect x="8" y="1" width="2" height="2"/><rect x="12" y="1" width="2" height="2"/><rect x="10" y="3" width="2" height="2"/><rect x="8" y="5" width="2" height="2"/><rect x="12" y="5" width="2" height="2"/><rect x="10" y="7" width="2" height="2"/><rect x="8" y="9" width="2" height="2"/><rect x="12" y="9" width="2" height="2"/><rect x="10" y="11" width="2" height="2"/><rect x="8" y="13" width="2" height="2"/><rect x="12" y="13" width="2" height="2"/></g>
<g fill="#fff"><rect x="10" y="1" width="2" height="2"/><rect x="8" y="3" width="2" height="2"/><rect x="12" y="3" width="2" height="2"/><rect x="10" y="5" width="2" height="2"/><rect x="8" y="7" width="2" height="2"/><rect x="12" y="7" width="2" height="2"/><rect x="10" y="9" width="2" height="2"/><rect x="8" y="11" width="2" height="2"/><rect x="12" y="11" width="2" height="2"/><rect x="10" y="13" width="2" height="2"/></g>
</svg>
<svg width="63" height="16" viewBox="0 0 63 16" style="left:713.8px;top:491.5px;"><rect transform="scale(1.95,1.95)" x="0" y="0" width="32" height="7.6" fill="url(#gp)"/></svg>
<div class="a" style="left:798px;top:460px;width:26px;height:64px;background:#262c3b;box-sizing:border-box;border:1px solid #699ce8;"></div>
<svg width="12" height="8" viewBox="-6 -4 12 8" style="left:805.05px;top:489.3px;"><path d="M-3.35 -1.75L0 1.75L3.35 -1.75" fill="none" stroke="#adafb6" stroke-width="2" stroke-linejoin="round" stroke-linecap="round"/></svg>
<div class="a" style="left:829px;top:461px;width:27px;height:62px;background:#262c3b;"></div>
<svg width="16" height="16" viewBox="0 0 16 16" style="left:834px;top:484px;"><path d="m5 1v1h-4v2h14v-2h-4v-1zm-3 4v8a2 2 0 0 0 2 2h8a2 2 0 0 0 2-2v-8zm1 2h2v6h-2zm4 0h2v6h-2zm4 0h2v6h-2z" fill="#e0e0e0"/></svg>
<div class="a" style="left:522px;top:524px;width:334px;height:120px;background:#2b3448;"></div>
<div class="a" style="left:689px;top:528px;width:167px;height:26px;background:#202531;"></div>
<div class="t" style="left:521.84px;top:533px;color:#a6a8ad;font-size:14px;line-height:16px;height:16px;"><span style="letter-spacing:-0.29px">T</span><span style="letter-spacing:0.32px">e</span><span style="letter-spacing:0.29px">x</span><span style="letter-spacing:1.03px">t</span><span style="letter-spacing:1.51px">u</span><span style="letter-spacing:0.73px">r</span><span style="letter-spacing:0.17px">e</span><span style="letter-spacing:0.32px"> </span><span style="letter-spacing:0.98px">N</span><span style="letter-spacing:0.57px">o</span><span style="letter-spacing:1.38px">r</span><span style="letter-spacing:0.09px">m</span><span style="letter-spacing:0.97px">a</span><span style="letter-spacing:0.6px">l</span><span style="letter-spacing:0px">s</span></div>
<div class="t" style="left:728.82px;top:533px;color:#cccdd3;font-size:14px;line-height:16px;height:16px;"><span style="letter-spacing:0.54px">A</span><span style="letter-spacing:1.34px">r</span><span style="letter-spacing:0.13px">r</span><span style="letter-spacing:0.8px">a</span><span style="letter-spacing:-0.02px">y</span><span style="letter-spacing:-0.5px"> </span><span style="letter-spacing:-0.15px">(</span><span style="letter-spacing:0.31px">s</span><span style="letter-spacing:0.48px">i</span><span style="letter-spacing:0.24px">z</span><span style="letter-spacing:0.17px">e </span><span style="letter-spacing:0.19px">0</span><span style="letter-spacing:0px">)</span></div>
<div class="a" style="left:689px;top:558px;width:167px;height:26px;background:#202531;"></div>
<div class="t" style="left:521.84px;top:563px;color:#a6a8ad;font-size:14px;line-height:16px;height:16px;"><span style="letter-spacing:-0.29px">T</span><span style="letter-spacing:0.32px">e</span><span style="letter-spacing:0.29px">x</span><span style="letter-spacing:1.03px">t</span><span style="letter-spacing:1.51px">u</span><span style="letter-spacing:0.73px">r</span><span style="letter-spacing:0.07px">e</span><span style="letter-spacing:0.1px">s</span><span style="letter-spacing:-0.45px"> </span><span style="letter-spacing:-0.25px">C</span><span style="letter-spacing:0.57px">o</span><span style="letter-spacing:1.09px">r</span><span style="letter-spacing:0.86px">n</span><span style="letter-spacing:0.82px">e</span><span style="letter-spacing:0.69px">r</span><span style="letter-spacing:0.08px"> </span><span style="letter-spacing:0.49px">O</span><span style="letter-spacing:1.3px">u</span><span style="letter-spacing:0.72px">t</span><span style="letter-spacing:0.82px">e</span><span style="letter-spacing:0px">r</span></div>
<div class="t" style="left:728.82px;top:563px;color:#cccdd3;font-size:14px;line-height:16px;height:16px;"><span style="letter-spacing:0.54px">A</span><span style="letter-spacing:1.34px">r</span><span style="letter-spacing:0.13px">r</span><span style="letter-spacing:0.8px">a</span><span style="letter-spacing:-0.02px">y</span><span style="letter-spacing:-0.5px"> </span><span style="letter-spacing:-0.15px">(</span><span style="letter-spacing:0.31px">s</span><span style="letter-spacing:0.48px">i</span><span style="letter-spacing:0.24px">z</span><span style="letter-spacing:0.17px">e </span><span style="letter-spacing:0.19px">0</span><span style="letter-spacing:0px">)</span></div>
<div class="a" style="left:689px;top:588px;width:167px;height:26px;background:#202531;"></div>
<div class="t" style="left:521.84px;top:593px;color:#a6a8ad;font-size:14px;line-height:16px;height:16px;"><span style="letter-spacing:-0.29px">T</span><span style="letter-spacing:0.32px">e</span><span style="letter-spacing:0.29px">x</span><span style="letter-spacing:1.03px">t</span><span style="letter-spacing:1.51px">u</span><span style="letter-spacing:0.73px">r</span><span style="letter-spacing:0.07px">e</span><span style="letter-spacing:0.1px">s</span><span style="letter-spacing:-0.45px"> </span><span style="letter-spacing:-0.25px">C</span><span style="letter-spacing:0.57px">o</span><span style="letter-spacing:1.09px">r</span><span style="letter-spacing:0.86px">n</span><span style="letter-spacing:0.82px">e</span><span style="letter-spacing:0.69px">r</span><span style="letter-spacing:0.48px"> </span><span style="letter-spacing:1.14px">I</span><span style="letter-spacing:1.21px">n</span><span style="letter-spacing:0.86px">n</span><span style="letter-spacing:0.82px">e</span><span style="letter-spacing:0px">r</span></div>
<div class="t" style="left:728.82px;top:593px;color:#cccdd3;font-size:14px;line-height:16px;height:16px;"><span style="letter-spacing:0.54px">A</span><span style="letter-spacing:1.34px">r</span><span style="letter-spacing:0.13px">r</span><span style="letter-spacing:0.8px">a</span><span style="letter-spacing:-0.02px">y</span><span style="letter-spacing:-0.5px"> </span><span style="letter-spacing:-0.15px">(</span><span style="letter-spacing:0.31px">s</span><span style="letter-spacing:0.48px">i</span><span style="letter-spacing:0.24px">z</span><span style="letter-spacing:0.17px">e </span><span style="letter-spacing:0.19px">0</span><span style="letter-spacing:0px">)</span></div>
<div class="a" style="left:689px;top:618px;width:167px;height:26px;background:#202531;"></div>
<div class="t" style="left:521.84px;top:623px;color:#a6a8ad;font-size:14px;line-height:16px;height:16px;"><span style="letter-spacing:-0.29px">T</span><span style="letter-spacing:0.32px">e</span><span style="letter-spacing:0.29px">x</span><span style="letter-spacing:1.03px">t</span><span style="letter-spacing:1.51px">u</span><span style="letter-spacing:0.73px">r</span><span style="letter-spacing:0.17px">e</span><span style="letter-spacing:0.32px"> </span><span style="letter-spacing:0.98px">N</span><span style="letter-spacing:0.57px">o</span><span style="letter-spacing:1.38px">r</span><span style="letter-spacing:0.09px">m</span><span style="letter-spacing:0.97px">a</span><span style="letter-spacing:0.6px">l</span><span style="letter-spacing:0.1px">s</span><span style="letter-spacing:-0.45px"> </span><span style="letter-spacing:-0.25px">C</span><span style="letter-spacing:0.57px">o</span><span style="letter-spacing:1.09px">r</span><span style="letter-spacing:0.86px">n</span><span style="letter-spacing:0.82px">e</span><span style="letter-spacing:0px">r</span></div>
<div class="t" style="left:728.82px;top:623px;color:#cccdd3;font-size:14px;line-height:16px;height:16px;"><span style="letter-spacing:0.54px">A</span><span style="letter-spacing:1.34px">r</span><span style="letter-spacing:0.13px">r</span><span style="letter-spacing:0.8px">a</span><span style="letter-spacing:-0.02px">y</span><span style="letter-spacing:-0.5px"> </span><span style="letter-spacing:-0.15px">(</span><span style="letter-spacing:0.31px">s</span><span style="letter-spacing:0.48px">i</span><span style="letter-spacing:0.24px">z</span><span style="letter-spacing:0.17px">e </span><span style="letter-spacing:0.19px">0</span><span style="letter-spacing:0px">)</span></div>
</body></html>
